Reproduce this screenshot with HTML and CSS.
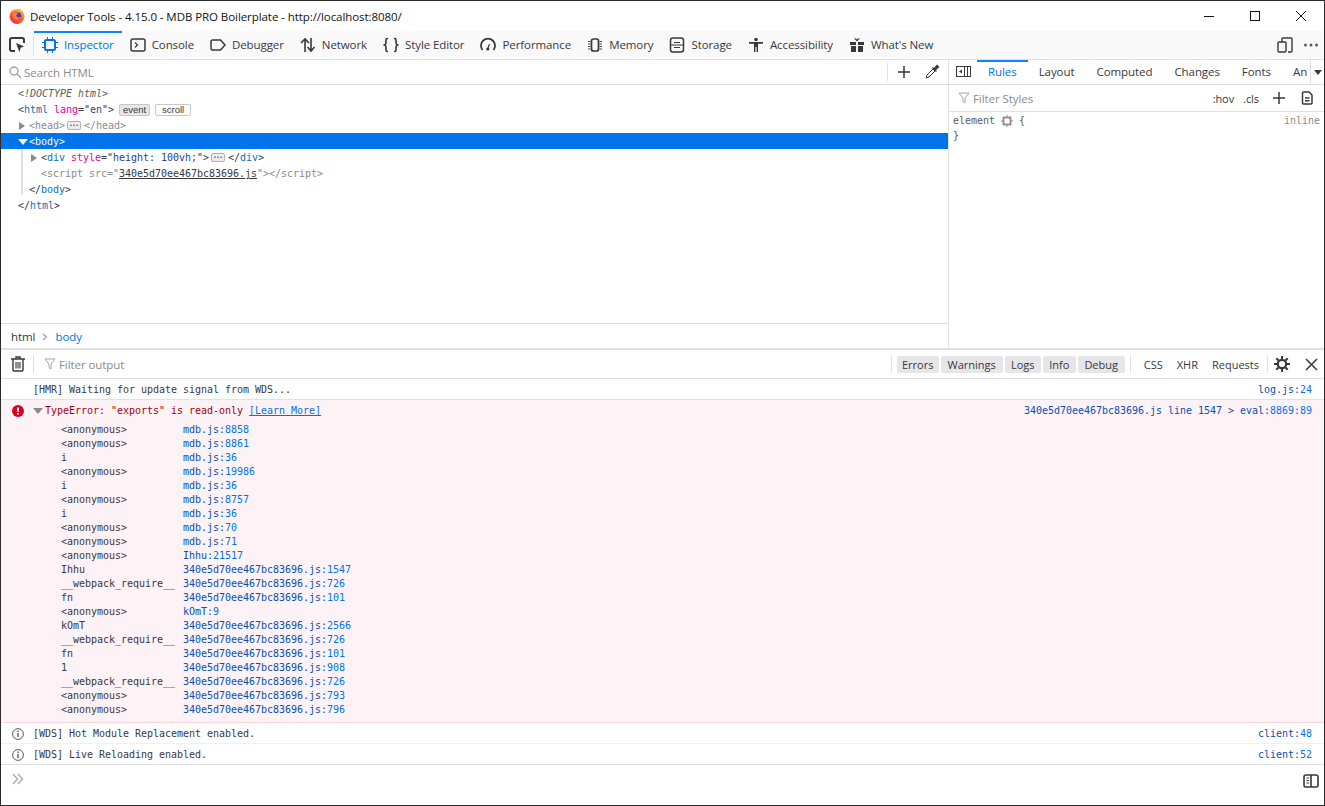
FILE: index.html
```html
<!DOCTYPE html>
<html lang="en">
<head>
    <meta charset="UTF-8">
    <title>Developer Tools</title>
    <link rel="stylesheet" href="styles.css">
</head>
<body>
<div class="window">

    <div class="titlebar">
        <svg class="fx-logo" width="16" height="16" viewBox="0 0 16 16">
            <defs>
                <linearGradient id="fx" x1="0.8" y1="0" x2="0.2" y2="1">
                    <stop offset="0" stop-color="#ffc22e"/>
                    <stop offset="0.5" stop-color="#ff6b2b"/>
                    <stop offset="1" stop-color="#e8205f"/>
                </linearGradient>
            </defs>
            <circle cx="8" cy="8.4" r="7.5" fill="url(#fx)"/>
            <path d="M11 1 C13 2.5 12 4 12 4 L8 3 Z" fill="#ffb02e"/>
            <circle cx="8.3" cy="8" r="4" fill="#6b2fb8"/>
            <path d="M4 7 C5 4.5 8 4 10 5 C8 5.5 7 6.500 7.500 8 C8 10 11 10 12 8.500 C11.500 11.500 8.500 12.500 6 11.200 C4.500 10.300 3.800 8.700 4 7 Z" fill="#ff8a2b"/>
        </svg>
        <span class="title-text">Developer Tools - 4.15.0 - MDB PRO Boilerplate - http://localhost:8080/</span>
        <div class="win-buttons">
            <svg width="46" height="30" viewBox="0 0 46 30"><path d="M18 15.500h10" stroke="#111" fill="none"/></svg>
            <svg width="46" height="30" viewBox="0 0 46 30"><rect x="18.500" y="10.500" width="9" height="9" stroke="#111" fill="none"/></svg>
            <svg width="46" height="30" viewBox="0 0 46 30"><path d="M18 10l10 10M28 10l-10 10" stroke="#111" fill="none"/></svg>
        </div>
    </div>

    <div class="toolbar">
        <div class="pick">
            <svg width="16" height="16" viewBox="0 0 16 16" fill="none" stroke="#38383d" stroke-width="2"><path d="M6 14H3a2 2 0 0 1-2-2V3a2 2 0 0 1 2-2h10a2 2 0 0 1 2 2v3"/><path d="M7 6l8 3.500-3.300 1.300L10.400 15z" fill="#38383d" stroke="none"/></svg>
        </div>
        <div class="tab tab-active">
            <svg width="16" height="16" viewBox="0 0 16 16" fill="none" stroke="#0074e8" stroke-width="2"><rect x="3" y="3" width="10" height="10" rx="1.500"/><path d="M5.500 0v2M10.500 0v2M5.500 14v2M10.500 14v2M0 5.500h2M0 10.500h2M14 5.500h2M14 10.500h2" stroke-width="1"/></svg>
            <span>Inspector</span>
        </div>
        <div class="tab">
            <svg width="16" height="16" viewBox="0 0 16 16" fill="none" stroke="#38383d" stroke-width="1.500"><rect x="1" y="2" width="14" height="12" rx="2"/><path d="M5 5.500L7.500 8 5 10.500" stroke-width="1.200"/></svg>
            <span>Console</span>
        </div>
        <div class="tab">
            <svg width="16" height="16" viewBox="0 0 16 16" fill="none" stroke="#38383d" stroke-width="1.500"><path d="M2.500 3h8L15 8l-4.500 5h-8A1.500 1.500 0 0 1 1 11.500v-7A1.500 1.500 0 0 1 2.500 3z"/></svg>
            <span>Debugger</span>
        </div>
        <div class="tab">
            <svg width="16" height="16" viewBox="0 0 16 16" fill="none" stroke="#38383d" stroke-width="1.600"><path d="M5 15V2M1 6l4-4 4 4M11 1v13M7.500 10l3.500 4 3.500-4"/></svg>
            <span>Network</span>
        </div>
        <div class="tab">
            <svg width="16" height="16" viewBox="0 0 16 16" fill="none" stroke="#38383d" stroke-width="1.600"><path d="M5 1.500H4.300C3.300 1.500 3 2 3 3v3c0 1-.5 1.500-1.500 2C2.500 8.500 3 9 3 10v3c0 1 .3 1.500 1.300 1.500H5M11 1.500h.7c1 0 1.300.5 1.300 1.500v3c0 1 .5 1.500 1.500 2-1 .5-1.500 1-1.500 2v3c0 1-.3 1.500-1.300 1.500H11"/></svg>
            <span>Style Editor</span>
        </div>
        <div class="tab">
            <svg width="16" height="16" viewBox="0 0 16 16" fill="none" stroke="#38383d" stroke-width="1.800"><path d="M2.500 13A7 7 0 1 1 13.500 13"/><path d="M9.500 7L8 11" stroke-width="1.200"/><circle cx="7.800" cy="12" r="1.600" fill="#38383d" stroke="none"/></svg>
            <span>Performance</span>
        </div>
        <div class="tab">
            <svg width="16" height="16" viewBox="0 0 16 16" fill="none" stroke="#38383d"><rect x="4.500" y="2" width="7" height="12" rx="2" stroke-width="1.700"/><path d="M1 4.500h2.500M1 7h2.500M1 9.500h2.500M1 12h2.500M12.500 4.500H15M12.500 7H15M12.500 9.500H15M12.500 12H15" stroke-width=".9"/></svg>
            <span>Memory</span>
        </div>
        <div class="tab">
            <svg width="16" height="16" viewBox="0 0 16 16" fill="none" stroke="#38383d" stroke-width="1.500"><rect x="1.500" y="1" width="13" height="14" rx="2.500"/><path d="M5 5.500h6M5 10.500h6M1.500 8h13" stroke-width="1.200"/></svg>
            <span>Storage</span>
        </div>
        <div class="tab">
            <svg width="16" height="16" viewBox="0 0 16 16" fill="#38383d"><circle cx="8" cy="2.500" r="1.800"/><path d="M1 5h14v1.800H10V15H8.600v-5H7.400v5H6V6.800H1z"/></svg>
            <span>Accessibility</span>
        </div>
        <div class="tab">
            <svg width="16" height="16" viewBox="0 0 16 16" fill="#38383d"><path d="M1 5h6v3H1zM9 5h6v3H9zM2 9h5v6H2zM9 9h5v6H9z"/><path d="M8 4.500L5 1.500h2.200L8 2.800l.8-1.300H11z"/></svg>
            <span>What's New</span>
        </div>
        <div class="toolbar-right">
            <svg width="16" height="16" viewBox="0 0 16 16" fill="none" stroke="#38383d" stroke-width="1.400"><rect x="1" y="5" width="8" height="10" rx="1"/><path d="M5 5V2a1 1 0 0 1 1-1h8a1 1 0 0 1 1 1v12a1 1 0 0 1-1 1h-3"/></svg>
            <svg width="16" height="16" viewBox="0 0 16 16" fill="#5b5b5f"><circle cx="2.500" cy="8" r="1.500"/><circle cx="8" cy="8" r="1.500"/><circle cx="13.500" cy="8" r="1.500"/></svg>
        </div>
    </div>

    <div class="inspector">
        <div class="markup-pane">
            <div class="searchbar">
                <svg width="13" height="13" viewBox="0 0 13 13" fill="none" stroke="#a5a5a8" stroke-width="1.500"><circle cx="5" cy="5" r="4"/><path d="M8 8l4 4"/></svg>
                <span class="search-text">Search HTML</span>
                <div class="search-tools">
                    <svg width="16" height="16" viewBox="0 0 16 16" stroke="#38383d" stroke-width="1.500"><path d="M8 2v12M2 8h12"/></svg>
                    <svg width="16" height="16" viewBox="0 0 16 16" fill="none" stroke="#38383d"><path d="M2 14l1-3 6-6 2 2-6 6z"/><path d="M8.500 3.500l4 4M10 5l3-3.500 1.500 1.500L11 6" fill="#38383d" stroke-width="1.400"/></svg>
                </div>
            </div>
            <div class="markup">
                <div class="node d0"><i class="dim">&lt;!DOCTYPE html&gt;</i></div>
                <div class="node d0"><span class="br">&lt;</span><span class="tag">html</span><span class="attr">lang</span><span class="br">=</span><span class="br">"</span><span class="val">en</span><span class="br">"&gt;</span><span class="badge badge-on">event</span><span class="badge">scroll</span></div>
                <div class="node d1 faded"><span class="tri tri-right"></span>&lt;head&gt;<span class="more">&bull;&bull;&bull;</span>&lt;/head&gt;</div>
                <div class="node d1 selected"><span class="tri tri-down"></span>&lt;body&gt;</div>
                <div class="children">
                    <div class="node d2"><span class="tri tri-right"></span><span class="br">&lt;</span><span class="tag">div</span><span class="attr">style</span><span class="br">="</span><span class="val">height: 100vh;</span><span class="br">"&gt;</span><span class="more">&bull;&bull;&bull;</span><span class="br">&lt;/</span><span class="tag">div</span><span class="br">&gt;</span></div>
                    <div class="node d2 faded">&lt;script src="<u class="link-dark">340e5d70ee467bc83696.js</u>"&gt;&lt;/script&gt;</div>
                    <div class="node d1"><span class="br">&lt;/</span><span class="tag">body</span><span class="br">&gt;</span></div>
                </div>
                <div class="node d0"><span class="br">&lt;/</span><span class="tag">html</span><span class="br">&gt;</span></div>
            </div>
            <div class="breadcrumbs">
                <span>html</span>
                <svg width="8" height="8" viewBox="0 0 8 8" fill="none" stroke="#a5a5a8" stroke-width="1.300"><path d="M2 1l3.500 3L2 7"/></svg>
                <span class="crumb-on">body</span>
            </div>
        </div>

        <div class="sidebar">
            <div class="side-tabs">
                <svg class="side-toggle" width="16" height="16" viewBox="0 0 16 16" fill="none" stroke="#38383d"><rect x=".5" y="2.500" width="14" height="10"/><path d="M8.500 2.500v10M11.500 2.500v10"/><path d="M6 5.500v4L3 7.500z" fill="#38383d" stroke="none"/></svg>
                <span class="side-tab side-active">Rules</span>
                <span class="side-tab">Layout</span>
                <span class="side-tab">Computed</span>
                <span class="side-tab">Changes</span>
                <span class="side-tab">Fonts</span>
                <span class="side-tab side-clip">An</span>
                <span class="side-more"><span class="tri tri-down tri-dark"></span></span>
            </div>
            <div class="side-filter">
                <svg width="12" height="12" viewBox="0 0 12 12" fill="none" stroke="#a5a5a8"><path d="M1 1h10L7 6v5L5 9.500V6z"/></svg>
                <span class="filter-text">Filter Styles</span>
                <div class="filter-tools">
                    <span>:hov</span>
                    <span class="tool-cls">.cls</span>
                    <svg class="tool-add" width="14" height="14" viewBox="0 0 14 14" stroke="#38383d" stroke-width="1.500"><path d="M7 1v12M1 7h12"/></svg>
                    <svg class="tool-doc" width="14" height="14" viewBox="0 0 14 14" fill="none" stroke="#38383d" stroke-width="1.500"><path d="M3.500 1H9l3 3v8a1 1 0 0 1-1 1H3.500a1 1 0 0 1-1-1V2a1 1 0 0 1 1-1zM5 7h4.500M5 9.800h4.500" /></svg>
                </div>
            </div>
            <div class="rule">
                <div class="rule-line">
                    <span>element</span>
                    <svg width="12" height="12" viewBox="0 0 12 12" fill="none" stroke="#8a8a8d"><rect x="2.500" y="2.500" width="7" height="7" stroke-width="1.800"/><path d="M6 0v2M6 10v2M0 6h2M10 6h2"/></svg>
                    <span>{</span>
                    <span class="rule-src">inline</span>
                </div>
                <div>}</div>
            </div>
        </div>
    </div>

    <div class="console-bar">
        <svg class="trash" width="14" height="16" viewBox="0 0 14 16" fill="none" stroke="#38383d" stroke-width="1.400"><path d="M0 3h14M5 3V1h4v2M2 3.500V14a1 1 0 0 0 1 1h8a1 1 0 0 0 1-1V3.500"/><path d="M5 6v6.500M7 6v6.500M9 6v6.500" stroke-width="1.100"/></svg>
        <span class="vsep"></span>
        <svg class="funnel" width="12" height="12" viewBox="0 0 12 12" fill="none" stroke="#a5a5a8"><path d="M1 1h10L7 6v5L5 9.500V6z"/></svg>
        <span class="filter-text">Filter output</span>
        <div class="console-right">
            <span class="vsep"></span>
            <div class="levels">
                <span class="level lv-errors">Errors</span>
                <span class="level lv-warnings">Warnings</span>
                <span class="level lv-logs">Logs</span>
                <span class="level lv-info">Info</span>
                <span class="level lv-debug">Debug</span>
            </div>
            <span class="vsep"></span>
            <span class="kind kind-first">CSS</span>
            <span class="kind">XHR</span>
            <span class="kind">Requests</span>
            <span class="vsep"></span>
            <svg class="gear" width="16" height="16" viewBox="0 0 16 16" fill="none" stroke="#38383d"><circle cx="8" cy="8" r="4.200" stroke-width="2.200"/><path d="M8 0v3M8 13v3M0 8h3M13 8h3M2.300 2.300l2.200 2.200M11.500 11.500l2.200 2.200M13.700 2.300l-2.200 2.200M4.500 11.500l-2.200 2.200" stroke-width="2"/></svg>
            <svg class="close-x" width="13" height="13" viewBox="0 0 13 13" stroke="#38383d" stroke-width="1.500"><path d="M1 1l11 11M12 1L1 12"/></svg>
        </div>
    </div>

    <div class="output">
        <div class="msg">
            <span class="msg-text">[HMR] Waiting for update signal from WDS...</span>
            <span class="src">log.js:<b>24</b></span>
        </div>
        <div class="msg-error">
            <div class="error-head">
                <svg class="err-icon" width="12" height="12" viewBox="0 0 12 12"><circle cx="6" cy="6" r="6" fill="#d70022"/><path d="M6 2.500v4.200M6 8v1.600" stroke="#fff" stroke-width="1.800"/></svg>
                <span class="tri tri-down tri-gray"></span>
                <span>TypeError: "exports" is read-only <a class="learn">[Learn More]</a></span>
                <span class="src">340e5d70ee467bc83696.js line 1547 &gt; eval:<b>8869:89</b></span>
            </div>
            <div class="stack">
                <span>&lt;anonymous&gt;</span><span class="fr">mdb.js:<b>8858</b></span>
                <span>&lt;anonymous&gt;</span><span class="fr">mdb.js:<b>8861</b></span>
                <span>i</span><span class="fr">mdb.js:<b>36</b></span>
                <span>&lt;anonymous&gt;</span><span class="fr">mdb.js:<b>19986</b></span>
                <span>i</span><span class="fr">mdb.js:<b>36</b></span>
                <span>&lt;anonymous&gt;</span><span class="fr">mdb.js:<b>8757</b></span>
                <span>i</span><span class="fr">mdb.js:<b>36</b></span>
                <span>&lt;anonymous&gt;</span><span class="fr">mdb.js:<b>70</b></span>
                <span>&lt;anonymous&gt;</span><span class="fr">mdb.js:<b>71</b></span>
                <span>&lt;anonymous&gt;</span><span class="fr">Ihhu:<b>21517</b></span>
                <span>Ihhu</span><span class="fr">340e5d70ee467bc83696.js:<b>1547</b></span>
                <span>__webpack_require__</span><span class="fr">340e5d70ee467bc83696.js:<b>726</b></span>
                <span>fn</span><span class="fr">340e5d70ee467bc83696.js:<b>101</b></span>
                <span>&lt;anonymous&gt;</span><span class="fr">kOmT:<b>9</b></span>
                <span>kOmT</span><span class="fr">340e5d70ee467bc83696.js:<b>2566</b></span>
                <span>__webpack_require__</span><span class="fr">340e5d70ee467bc83696.js:<b>726</b></span>
                <span>fn</span><span class="fr">340e5d70ee467bc83696.js:<b>101</b></span>
                <span>1</span><span class="fr">340e5d70ee467bc83696.js:<b>908</b></span>
                <span>__webpack_require__</span><span class="fr">340e5d70ee467bc83696.js:<b>726</b></span>
                <span>&lt;anonymous&gt;</span><span class="fr">340e5d70ee467bc83696.js:<b>793</b></span>
                <span>&lt;anonymous&gt;</span><span class="fr">340e5d70ee467bc83696.js:<b>796</b></span>
            </div>
        </div>
        <div class="msg msg-info">
            <svg class="info-icon" width="12" height="12" viewBox="0 0 12 12" fill="none" stroke="#5b5b5f"><circle cx="6" cy="6" r="5.400"/><path d="M6 5v4M6 2.600v1.300" stroke-width="1.400"/></svg>
            <span class="msg-text">[WDS] Hot Module Replacement enabled.</span>
            <span class="src">client:<b>48</b></span>
        </div>
        <div class="msg msg-info">
            <svg class="info-icon" width="12" height="12" viewBox="0 0 12 12" fill="none" stroke="#5b5b5f"><circle cx="6" cy="6" r="5.400"/><path d="M6 5v4M6 2.600v1.300" stroke-width="1.400"/></svg>
            <span class="msg-text">[WDS] Live Reloading enabled.</span>
            <span class="src">client:<b>52</b></span>
        </div>
        <div class="input-row">
            <svg width="12" height="12" viewBox="0 0 12 12" fill="none" stroke="#a5a5a8" stroke-width="1.200"><path d="M1 1l4.500 5L1 11M6 1l4.500 5L6 11"/></svg>
            <svg class="sidebar-btn" width="16" height="16" viewBox="0 0 16 16" fill="none" stroke="#38383d"><rect x="1" y="2" width="14" height="12" rx="2" stroke-width="1.600"/><path d="M8 2v12" stroke-width="1.600"/><path d="M3.500 5H6M3.500 7.500H6M3.500 10H6"/></svg>
        </div>
    </div>
</div>
</body>
</html>
```

FILE: styles.css
```css
*{
    margin: 0;
    padding: 0;
    box-sizing: border-box;
}

html,body{
    width: 1325px;
    height: 806px;
    overflow: hidden;
    background-color: #fff;
}

body{
    font-family: "Open Sans", "Noto Sans", sans-serif;
    font-size: 11.5px;
    letter-spacing: -0.07px;
    color: #38383d;
}

svg{
    flex: none;
    display: block;
}

.window{
    width: 1325px;
    height: 806px;
    display: flex;
    flex-direction: column;
    border: 1px solid #2b2b2b;
}

/* title bar */
.titlebar{
    height: 30px;
    flex: none;
    display: flex;
    align-items: center;
    padding-left: 8px;
    background-color: #fff;
}

.title-text{
    margin-left: 5px;
    color: #111;
}

.win-buttons{
    margin-left: auto;
    display: flex;
    align-items: center;
}

/* main toolbar */
.toolbar{
    height: 29px;
    flex: none;
    display: flex;
    align-items: stretch;
    background-color: #f9f9fa;
    border-bottom: 1px solid #e0e0e2;
}

.pick{
    width: 33px;
    display: flex;
    align-items: center;
    padding-left: 8px;
    position: relative;
}

.pick::after{
    content: "";
    position: absolute;
    right: 0;
    top: 5px;
    bottom: 4px;
    width: 1px;
    background-color: #e0e0e2;
}

.tab{
    display: flex;
    align-items: center;
    gap: 6px;
    padding: 0 8px;
    letter-spacing: -0.09px;
}

.tab span{
    margin-top: -2px;
}

.tab-active{
    color: #0074e8;
    border-top: 2px solid #0a84ff;
    padding-bottom: 2px;
}

.toolbar-right{
    margin-left: auto;
    display: flex;
    align-items: center;
    gap: 10px;
    padding-right: 5px;
}

/* inspector */
.inspector{
    height: 290px;
    flex: none;
    display: flex;
    border-bottom: 2px solid #e0e0e2;
}

.markup-pane{
    width: 948px;
    flex: none;
    display: flex;
    flex-direction: column;
    border-right: 1px solid #e0e0e2;
}

.searchbar{
    height: 25px;
    flex: none;
    display: flex;
    align-items: center;
    padding-left: 8px;
    border-bottom: 1px solid #e0e0e2;
}

.search-text{
    margin-left: 2px;
    color: #8a8a8d;
}

.search-tools{
    margin-left: auto;
    height: 18px;
    display: flex;
    align-items: center;
    gap: 12px;
    padding: 0 8px;
    border-left: 1px solid #e0e0e2;
}

.markup{
    flex: 1;
    font-family: "DejaVu Sans Mono", "Liberation Mono", monospace;
    font-size: 10px;
    letter-spacing: -0.02px;
}

.node{
    height: 16px;
    padding-top: 1px;
    line-height: 15px;
    display: flex;
    align-items: center;
    white-space: pre;
    color: #737373;
}

.d0{ padding-left: 17px; }
.d1{ padding-left: 28px; }
.d2{ padding-left: 40px; }

.children{
    position: relative;
}

.children::before{
    content: "";
    position: absolute;
    left: 20px;
    top: 0;
    bottom: 2px;
    width: 2px;
    background-color: #e0e0e2;
}

.dim{ color: #5b5b5f; }
.br{ color: #38383d; }
.tag{ color: #0b6fb8; }
.attr{ color: #dd00a9; margin-left: 6px; }
.val{ color: #2b3f8c; }
.faded{ color: #8a8a8d; }
.link-dark{ color: #38383d; }

.selected{
    background-color: #0074e8;
    color: #fff;
}

.tri{
    width: 0;
    height: 0;
    flex: none;
    position: absolute;
}

.node .tri{
    margin-left: -10px;
}

.tri-right{
    border-left: 6px solid #8a8a8d;
    border-top: 4.5px solid transparent;
    border-bottom: 4.5px solid transparent;
}

.tri-down{
    border-top: 6px solid #fff;
    border-left: 5px solid transparent;
    border-right: 5px solid transparent;
}

.node .tri-down{
    margin-left: -11px;
}

.tri-dark{
    border-top-color: #38383d;
    border-top-width: 5px;
    border-left-width: 4px;
    border-right-width: 4px;
}

.tri-gray{
    position: static;
    border-top-color: #8a8a8d;
    border-top-width: 6px;
    margin: 0 2px 0 9px;
}

.badge{
    width: 31px;
    height: 12px;
    line-height: 10px;
    margin-left: 5px;
    text-align: center;
    border: 1px solid #c8c8ca;
    border-radius: 2px;
    font-family: "Liberation Sans", sans-serif;
    font-size: 9.5px;
    color: #38383d;
}

.badge + .badge{
    width: 36px;
}

.badge-on{
    background-color: #e6e6e8;
}

.more{
    height: 9px;
    width: 14px;
    margin: 0 3px 0 2px;
    line-height: 6px;
    text-align: center;
    background-color: #ededf0;
    border: 1px solid #b1b1b3;
    border-radius: 2px;
    font-size: 5px;
    color: #38383d;
}

.breadcrumbs{
    height: 25px;
    flex: none;
    display: flex;
    align-items: center;
    gap: 6px;
    padding: 1px 0 0 10px;
    border-top: 1px solid #e0e0e2;
}

.crumb-on{
    color: #0074e8;
}

/* rules sidebar */
.sidebar{
    flex: 1;
    min-width: 0;
    display: flex;
    flex-direction: column;
}

.side-tabs{
    height: 25px;
    flex: none;
    display: flex;
    align-items: stretch;
    border-bottom: 1px solid #e0e0e2;
}

.side-toggle{
    align-self: center;
    margin: 0 5px 0 7px;
}

.side-tab{
    padding: 2px 11px 0;
    line-height: 20px;
}

.side-active{
    color: #0074e8;
    border-top: 2px solid #0a84ff;
    padding-top: 0;
}

.side-clip{
    flex: 1;
    padding-right: 0;
    overflow: hidden;
}

.side-more{
    width: 14px;
    flex: none;
    position: relative;
    display: flex;
    align-items: center;
    justify-content: center;
    border-left: 1px solid #e0e0e2;
}

.side-filter{
    height: 27px;
    flex: none;
    display: flex;
    align-items: center;
    padding-left: 9px;
    border-bottom: 1px solid #e0e0e2;
}

.filter-text{
    margin-left: 3px;
    color: #8a8a8d;
}

.filter-tools{
    margin-left: auto;
    display: flex;
    align-items: center;
    padding-right: 10px;
    font-size: 11px;
}

.tool-cls{ margin-left: 9px; }
.tool-add{ margin-left: 13px; }
.tool-doc{ margin-left: 14px; }

.rule{
    padding: 1px 4px;
    font-family: "DejaVu Sans Mono", "Liberation Mono", monospace;
    font-size: 10px;
    letter-spacing: -0.02px;
    line-height: 15px;
    color: #5b5b5f;
}

.rule-line{
    display: flex;
    align-items: center;
    gap: 6px;
}

.rule-src{
    margin-left: auto;
    color: #8a8a8d;
}

/* console toolbar */
.console-bar{
    height: 29px;
    flex: none;
    display: flex;
    align-items: center;
    padding-left: 10px;
    border-bottom: 1px solid #e0e0e2;
}

.vsep{
    width: 1px;
    height: 18px;
    flex: none;
    background-color: #e0e0e2;
}

.trash{
    margin-right: 8px;
}

.funnel{
    margin-left: 10px;
}

.console-right{
    margin-left: auto;
    display: flex;
    align-items: center;
    font-size: 11px;
    letter-spacing: 0;
}

.levels{
    display: flex;
    gap: 2px;
    margin: 0 5px;
}

.level{
    height: 17px;
    line-height: 17px;
    text-align: center;
    border-radius: 2px;
    background-color: #e6e6e8;
}

.lv-errors{ width: 42px; }
.lv-warnings{ width: 62px; }
.lv-logs{ width: 36px; }
.lv-info{ width: 33px; }
.lv-debug{ width: 47px; }

.kind{
    margin-left: 14px;
}

.kind-first{
    margin-left: 13px;
}

.kind + .vsep{
    margin-left: 8px;
}

.gear{
    margin-left: 6px;
}

.close-x{
    margin: 0 6px 0 15px;
}

/* output */
.output{
    flex: 1;
    display: flex;
    flex-direction: column;
    font-family: "DejaVu Sans Mono", "Liberation Mono", monospace;
    font-size: 10px;
    letter-spacing: -0.02px;
    color: #38383d;
}

.msg{
    height: 21px;
    flex: none;
    display: flex;
    align-items: center;
    padding: 1px 12px 0 32px;
    border-bottom: 1px solid #f0f0f2;
    white-space: pre;
}

.src{
    margin-left: auto;
    color: #0a4fb0;
}

.src b,
.fr b{
    font-weight: normal;
    color: #0074e8;
}

.msg-info{
    padding-left: 11px;
}

.info-icon{
    margin-right: 9px;
}

.msg-error{
    height: 324px;
    flex: none;
    background-color: #fdf2f5;
    border-bottom: 1px solid #fbd5dc;
    border-top: 1px solid #fbd5dc;
    margin-top: -1px;
    color: #a4000f;
}

.error-head{
    height: 21px;
    display: flex;
    align-items: center;
    padding: 0 12px 0 11px;
    white-space: pre;
}

.learn{
    color: #0a6fe0;
    text-decoration: underline;
}

.stack{
    display: grid;
    grid-template-columns: 122px 1fr;
    grid-auto-rows: 14px;
    padding: 2px 0 0 60px;
    line-height: 14px;
    color: #38383d;
}

.fr{
    color: #0a4fb0;
}

.input-row{
    flex: 1;
    display: flex;
    align-items: flex-start;
    justify-content: space-between;
    padding: 8px 5px 0 11px;
    border-top: 1px solid #e0e0e2;
    margin-top: -1px;
}
```
